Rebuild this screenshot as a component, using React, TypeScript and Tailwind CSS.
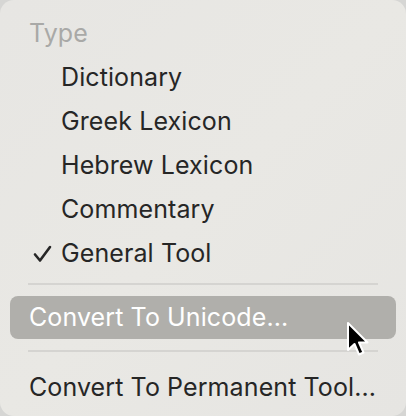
import React from "react";

const items = ["Dictionary", "Greek Lexicon", "Hebrew Lexicon", "Commentary"];

export default function App() {
  return (
    <div className="w-[406px] h-[416px] bg-[#d6d6d4]" style={{ fontFamily: "Inter, 'Noto Sans', sans-serif" }}>
      <div className="relative w-full h-full rounded-[14px] bg-gradient-to-br from-[#e7e6e3] via-[#e9e8e4] to-[#e6e5e2] flex flex-col pt-[12px] text-[25px] tracking-[0.1px] text-[#262626]">
        <div className="h-[44px] flex items-center pl-[29px] text-[#a9a9a7]">Type</div>
        {items.map((t) => (
          <div key={t} className="h-[44px] flex items-center pl-[61px]">{t}</div>
        ))}
        <div className="h-[44px] flex items-center">
          <span className="w-[61px] flex justify-end pr-[9px]">
            <svg width="19" height="18" viewBox="0 0 19 18" fill="none">
              <path d="M2 9.5 L7 15.5 L17 2" stroke="#262626" strokeWidth="2.6" strokeLinecap="round" strokeLinejoin="round" />
            </svg>
          </span>
          <span>General Tool</span>
        </div>
        <div className="mt-[7px] mx-[28px] h-[2px] bg-[#d5d4d1]" />
        <div className="mt-[11px] mx-[10px] h-[43px] rounded-[8px] bg-[#b0afab] flex items-center pl-[19px] text-white">Convert To Unicode...</div>
        <div className="mt-[11px] mx-[28px] h-[2px] bg-[#d5d4d1]" />
        <div className="mt-[14px] h-[44px] flex items-center pl-[29px]">Convert To Permanent Tool...</div>
        <svg className="absolute left-[344px] top-[319px]" width="30" height="42" viewBox="0 0 30 42">
          <path d="M4 4 L4 31 L10.5 25 L15 35.5 L19.5 33.5 L15 23.5 L23.5 23.5 Z" fill="#000" stroke="#fff" strokeWidth="2" strokeLinejoin="round" />
        </svg>
      </div>
    </div>
  );
}
